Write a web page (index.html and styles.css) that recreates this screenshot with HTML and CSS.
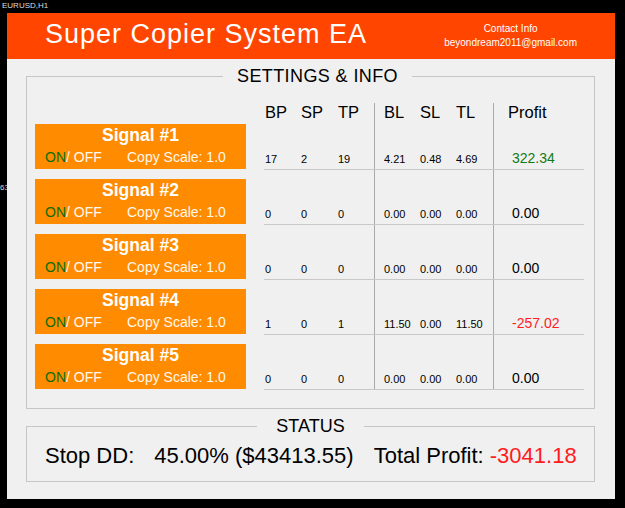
FILE: index.html
```html
<!DOCTYPE html>
<html lang="en">
<head>
<meta charset="UTF-8" />
<meta name="viewport" content="width=device-width, initial-scale=1.0" />
<title>Super Copier System EA</title>
<link rel="stylesheet" href="styles.css">
</head>

<body>
<!-- chart behind the EA window -->
<div class="symbol">EURUSD,H1</div>
<div class="price-tag">63</div>

<div class="window">
    <!-- ==========  TITLE BAR  ========== -->
    <header class="title-bar">
        <h1>Super Copier System EA</h1>
        <div class="contact">Contact Info<br>beyondream2011@gmail.com</div>
    </header>

    <main class="panel">
        <!-- ==========  SETTINGS & INFO  ========== -->
        <fieldset class="group settings">
            <legend>SETTINGS &amp; INFO</legend>

            <div class="table">
                <div class="row head">
                    <div class="cells">
                        <span>BP</span><span>SP</span><span>TP</span>
                        <span class="sep">BL</span><span>SL</span><span>TL</span>
                        <span class="sep profit">Profit</span>
                    </div>
                </div>

                <div class="row data">
                    <div class="sig">
                        <div class="sig-name">Signal #1</div>
                        <div class="sig-opts"><span class="onoff"><span class="on">ON</span>/ OFF</span><span>Copy Scale: 1.0</span></div>
                    </div>
                    <div class="cells">
                        <span>17</span><span>2</span><span>19</span>
                        <span class="sep">4.21</span><span>0.48</span><span>4.69</span>
                        <span class="sep profit pos">322.34</span>
                    </div>
                </div>

                <div class="row data">
                    <div class="sig">
                        <div class="sig-name">Signal #2</div>
                        <div class="sig-opts"><span class="onoff"><span class="on">ON</span>/ OFF</span><span>Copy Scale: 1.0</span></div>
                    </div>
                    <div class="cells">
                        <span>0</span><span>0</span><span>0</span>
                        <span class="sep">0.00</span><span>0.00</span><span>0.00</span>
                        <span class="sep profit">0.00</span>
                    </div>
                </div>

                <div class="row data">
                    <div class="sig">
                        <div class="sig-name">Signal #3</div>
                        <div class="sig-opts"><span class="onoff"><span class="on">ON</span>/ OFF</span><span>Copy Scale: 1.0</span></div>
                    </div>
                    <div class="cells">
                        <span>0</span><span>0</span><span>0</span>
                        <span class="sep">0.00</span><span>0.00</span><span>0.00</span>
                        <span class="sep profit">0.00</span>
                    </div>
                </div>

                <div class="row data">
                    <div class="sig">
                        <div class="sig-name">Signal #4</div>
                        <div class="sig-opts"><span class="onoff"><span class="on">ON</span>/ OFF</span><span>Copy Scale: 1.0</span></div>
                    </div>
                    <div class="cells">
                        <span>1</span><span>0</span><span>1</span>
                        <span class="sep">11.50</span><span>0.00</span><span>11.50</span>
                        <span class="sep profit neg">-257.02</span>
                    </div>
                </div>

                <div class="row data">
                    <div class="sig">
                        <div class="sig-name">Signal #5</div>
                        <div class="sig-opts"><span class="onoff"><span class="on">ON</span>/ OFF</span><span>Copy Scale: 1.0</span></div>
                    </div>
                    <div class="cells">
                        <span>0</span><span>0</span><span>0</span>
                        <span class="sep">0.00</span><span>0.00</span><span>0.00</span>
                        <span class="sep profit">0.00</span>
                    </div>
                </div>
            </div>
        </fieldset>

        <!-- ==========  STATUS  ========== -->
        <fieldset class="group status">
            <legend>STATUS</legend>
            <div class="status-line">
                <span>Stop DD:</span>
                <span class="dd-value">45.00% ($43413.55)</span>
                <span class="total">Total Profit: <span class="neg">-3041.18</span></span>
            </div>
        </fieldset>
    </main>
</div>
</body>
</html>
```

FILE: styles.css
```css
/* ========  BASE  ======== */
* { box-sizing: border-box; }
:root {
    --title-red: #ff4500;
    --signal-orange: #ff8c00;
    --panel-grey: #f0f0f0;
    --frame: #c6c6c6;
    --rule: #c8c8c8;
    --divider: #a9a9a9;
    --green: #137a13;
    --red: #ff1c1c;
}
body {
    margin: 0;
    background: #000;
    color: #000;
    font-family: "Liberation Sans", Arial, sans-serif;
    position: relative;
    min-height: 508px;
}

/* ========  CHART BITS  ======== */
.symbol {
    height: 13px;
    padding-left: 2px;
    font-size: 8px;
    line-height: 12px;
    color: #ddd;
}
.price-tag {
    position: absolute;
    left: 0;
    top: 183px;
    font-size: 8px;
    color: #ddd;
}

/* ========  WINDOW  ======== */
.window {
    position: relative;
    z-index: 1;
    margin-left: 7px;
    width: 608px;
}
.title-bar {
    height: 46px;
    background: var(--title-red);
    color: #fff;
    display: flex;
    align-items: center;
    justify-content: space-between;
    padding: 0 38px 4px 38px;
}
.title-bar h1 {
    margin: 0;
    font-size: 27px;
    line-height: 30px;
    font-weight: normal;
    letter-spacing: 1px;
}
.contact {
    font-size: 10px;
    line-height: 14px;
    text-align: center;
    margin-top: 4px;
}

.panel {
    display: block;
    background: var(--panel-grey);
    padding: 7px 20px 17px 19px;
}

/* ========  GROUP BOXES  ======== */
.group {
    margin: 0;
    padding: 0;
    border: 1px solid var(--frame);
    min-width: 0;
}
.group legend {
    padding: 0 14px;
    font-size: 18px;
    line-height: 20px;
}
.settings legend { margin-left: 196px; letter-spacing: .4px; }
.status { margin-top: 7px; }
.status legend { margin: 0 auto; padding: 0 19px; }

/* ========  SIGNAL TABLE  ======== */
.table {
    margin: 17px 0 18px 8px;
}
.row { display: flex; }
.head { padding-left: 229px; }

.cells {
    width: 320px;
    display: grid;
    grid-template-columns: 37px 37px 36px 46px 36px 37px 91px;
    border-bottom: 1px solid var(--rule);
}
.cells > span {
    display: flex;
    align-items: flex-end;
    padding-bottom: 3px;
    font-size: 11px;
    line-height: 13px;
}
.cells > span:first-child { padding-left: 1px; }
.cells > .sep {
    border-left: 1px solid var(--divider);
    padding-left: 9px;
}
.cells > .profit {
    padding-left: 18px;
    font-size: 14px;
    line-height: 16px;
}
.pos { color: var(--green); }
.neg { color: var(--red); }

.head .cells {
    height: 21px;
    border-bottom: none;
}
.head .cells > span {
    align-items: flex-start;
    padding-bottom: 0;
    font-size: 16.5px;
    line-height: 18px;
}
.head .cells > .profit { padding-left: 14px; }

.sig {
    flex: none;
    width: 211px;
    height: 45px;
    margin: 0 18px 1px 0;
    background: var(--signal-orange);
    color: #fff;
}
.data + .data .sig { margin-top: 9px; }
.sig-name {
    padding-top: 1px;
    font-size: 17.5px;
    font-weight: bold;
    line-height: 20px;
    text-align: center;
}
.sig-opts {
    display: flex;
    margin-top: 4px;
    padding-left: 10px;
    font-size: 14px;
    line-height: 16px;
    color: #fff8ee;
}
.onoff { width: 82px; }
.on { color: #0e6b00; }

/* ========  STATUS  ======== */
.status-line {
    display: flex;
    margin-top: 8px;
    padding: 0 0 13px 18px;
    font-size: 22px;
    line-height: 24px;
}
.dd-value { margin-left: 20px; }
.total { margin-left: 20px; }
```
